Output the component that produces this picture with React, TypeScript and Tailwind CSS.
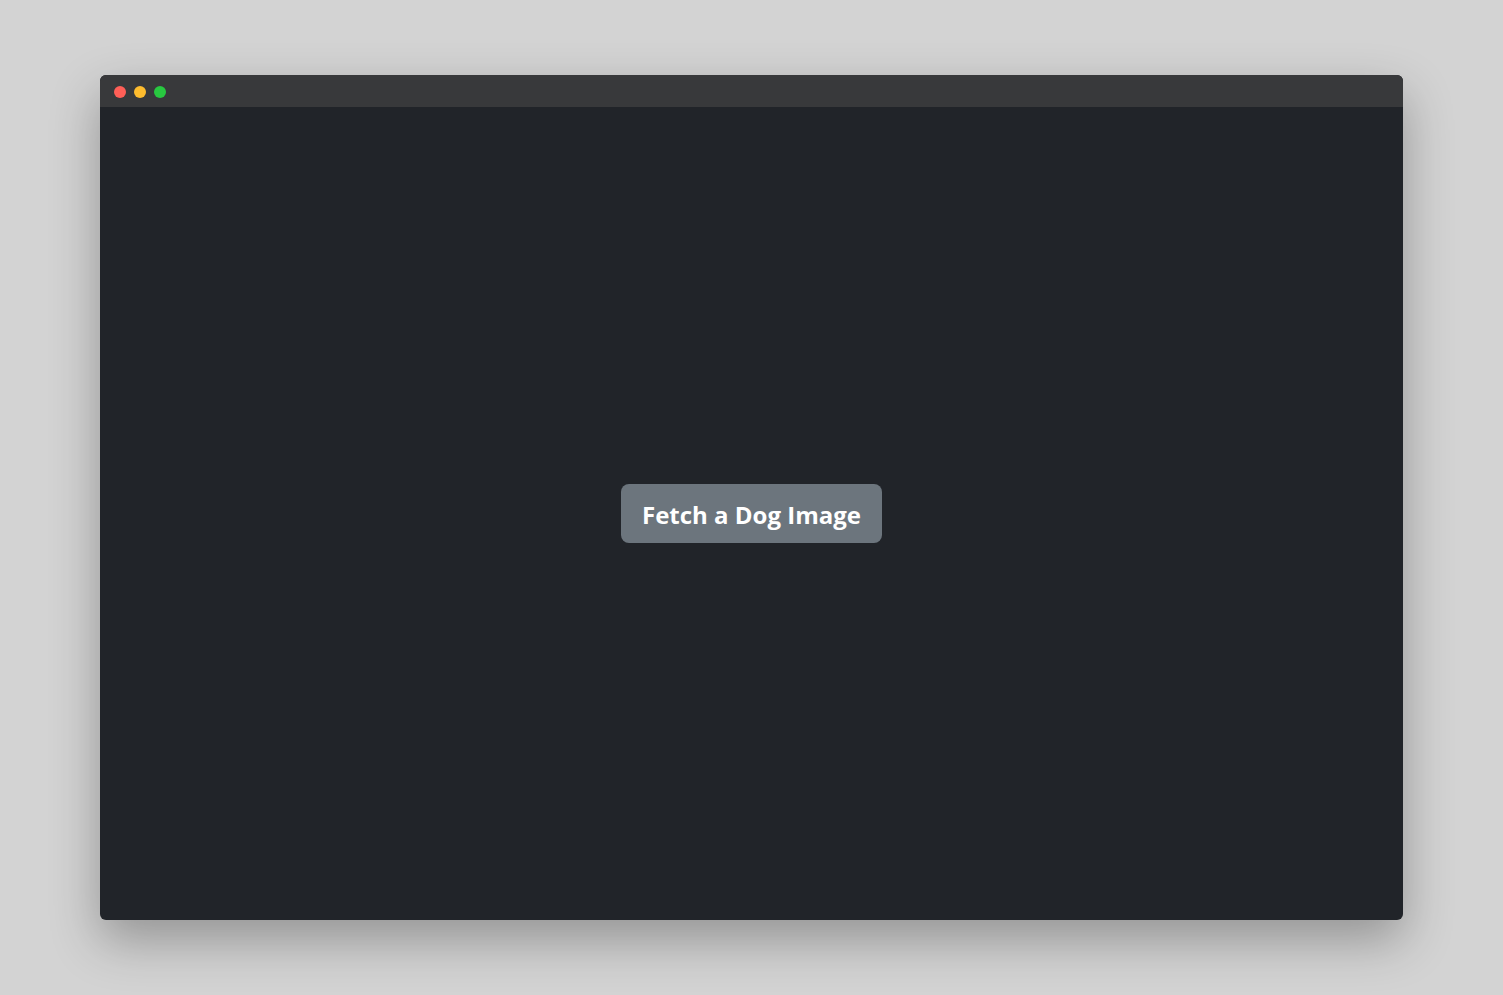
import React from 'react';

export default function App() {
    return (
        <div className="min-h-screen w-full bg-[#d3d3d3] pt-[75px] pl-[100px]">
            <div className="flex h-[845px] w-[1303px] flex-col overflow-hidden rounded-[6px] bg-[#212429] shadow-[0_20px_50px_rgba(0,0,0,0.3)]">
                <div className="flex h-[32px] items-center gap-[8px] bg-[#38393b] pl-[14px] pt-[2px]">
                    <span className="h-[12px] w-[12px] rounded-full bg-[#ff5f57]"></span>
                    <span className="h-[12px] w-[12px] rounded-full bg-[#febc2e]"></span>
                    <span className="h-[12px] w-[12px] rounded-full bg-[#28c840]"></span>
                </div>
                <div className="flex flex-1 items-center justify-center">
                    <button className="flex h-[59px] w-[261px] items-center justify-center rounded-[8px] bg-[#6c757d] pt-[2px] font-['Open_Sans',sans-serif] text-[24px] font-bold text-white">
                        Fetch a Dog Image
                    </button>
                </div>
            </div>
        </div>
    );
}
